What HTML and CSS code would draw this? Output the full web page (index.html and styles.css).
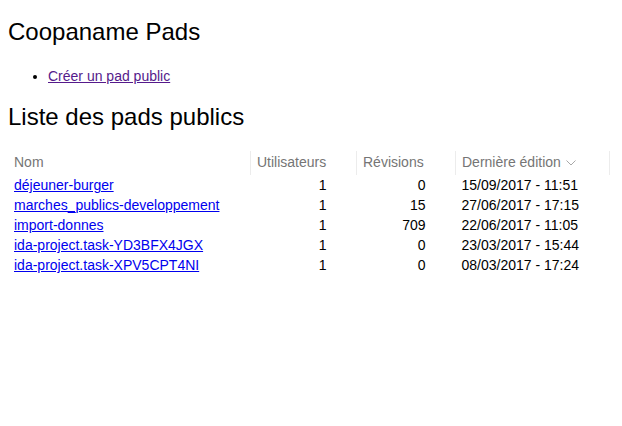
FILE: index.html
```html
<!DOCTYPE html>
<html lang="fr">
<head>
<meta charset="utf-8">
<title>Coopaname Pads</title>
<link rel="stylesheet" href="styles.css">
</head>
<body>
<h1 class="title first">Coopaname Pads</h1>
<ul class="actions">
  <li><a class="visited" href="#">Créer un pad public</a></li>
</ul>
<h2 class="title second">Liste des pads publics</h2>
<table class="pads">
  <thead>
    <tr>
      <th class="c-name">Nom</th>
      <th class="c-users">Utilisateurs</th>
      <th class="c-rev">Révisions</th>
      <th class="c-date">Dernière édition <svg class="sort" width="10" height="6" viewBox="0 0 10 6"><path d="M0.5 0.5 L5 5 L9.5 0.5" fill="none" stroke="#a8a8a8" stroke-width="1"/></svg></th>
    </tr>
  </thead>
  <tbody>
    <tr><td><a href="#">déjeuner-burger</a></td><td class="num">1</td><td class="num">0</td><td>15/09/2017 - 11:51</td></tr>
    <tr><td><a href="#">marches_publics-developpement</a></td><td class="num">1</td><td class="num">15</td><td>27/06/2017 - 17:15</td></tr>
    <tr><td><a href="#">import-donnes</a></td><td class="num">1</td><td class="num">709</td><td>22/06/2017 - 11:05</td></tr>
    <tr><td><a href="#">ida-project.task-YD3BFX4JGX</a></td><td class="num">1</td><td class="num">0</td><td>23/03/2017 - 15:44</td></tr>
    <tr><td><a href="#">ida-project.task-XPV5CPT4NI</a></td><td class="num">1</td><td class="num">0</td><td>08/03/2017 - 17:24</td></tr>
  </tbody>
</table>
</body>
</html>
```

FILE: styles.css
```css
html, body {
  background: #ffffff;
}
body {
  margin: 0;
  padding: 8px;
  font-family: "Liberation Sans", Arial, sans-serif;
  font-size: 14px;
  color: #000;
}
.title {
  font-size: 24px;
  font-weight: normal;
  margin: 20px 0;
}
.title.first {
  margin-top: 10px;
  margin-bottom: 22px;
}
.title.second {
  margin-top: 19px;
}
.actions {
  margin: 14px 0;
  padding-left: 40px;
}
a {
  color: #0000ee;
}
a.visited {
  color: #551a8b;
}
.pads {
  border-collapse: collapse;
  width: 602px;
}
.pads th {
  font-weight: normal;
  text-align: left;
  color: #757575;
  padding: 3px 6px 5px;
  line-height: 16px;
  border-right: 1px solid #ececec;
}
.pads td {
  padding: 2px 6px;
  line-height: 16px;
}
.c-name { width: 230px; }
.c-users { width: 93px; }
.c-rev { width: 86px; }
.sort {
  margin-left: 1px;
  vertical-align: 1px;
}
.pads td.num {
  text-align: right;
  padding-right: 30px;
}
```
